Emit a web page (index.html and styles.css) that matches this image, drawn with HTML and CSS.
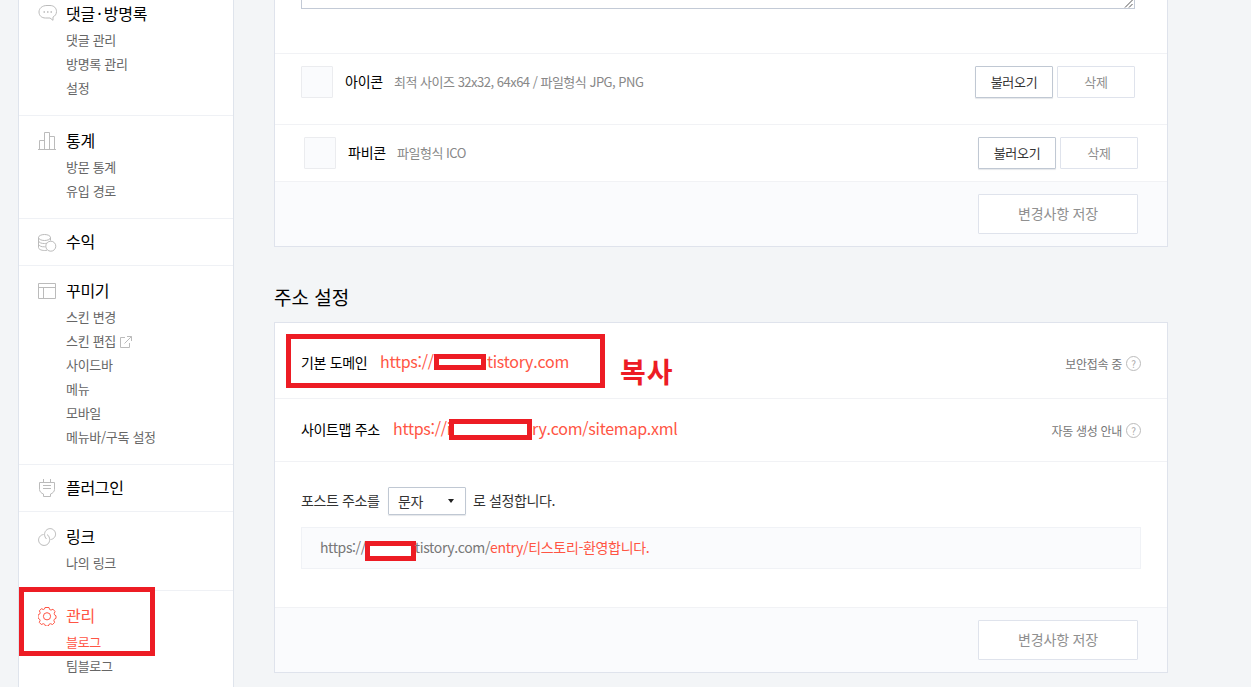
FILE: index.html
```html
<!DOCTYPE html>
<html lang="ko">
<head>
    <meta charset="UTF-8">
    <meta name="viewport" content="width=device-width, initial-scale=1.0">
    <title>블로그 관리</title>
    <link rel="stylesheet" href="styles.css">
</head>
<body>
    <div class="wrap">
        <nav class="sidebar">
            <div class="menu-group">
                <h2>
                    <svg class="ico" viewBox="0 0 20 20"><path d="M9 1.500h3c4 0 6.500 2.700 6.500 6 0 2.700-1.500 4.500-3.500 5.500v3.300l-3-2.300H7.500c-4 0-6.500-2.500-6.500-6s3-6.500 8-6.500z"/><path d="M5.500 8h1.500M9 8h1.500M12.500 8H14" stroke-width="1.500"/></svg>
                    댓글<span class="dot">·</span>방명록
                </h2>
                <ul>
                    <li>댓글 관리</li>
                    <li>방명록 관리</li>
                    <li>설정</li>
                </ul>
            </div>
            <div class="menu-group">
                <h2>
                    <svg class="ico" viewBox="0 0 20 20"><path d="M0 18.500h18M1.500 18V9.500h5M6.500 18V1.500h5V18M11.500 5.500h5V18"/></svg>
                    통계
                </h2>
                <ul>
                    <li>방문 통계</li>
                    <li>유입 경로</li>
                </ul>
            </div>
            <div class="menu-group single">
                <h2>
                    <svg class="ico ico-coin" viewBox="0 0 20 20"><ellipse cx="6.500" cy="4.500" rx="6" ry="3"/><path d="M.5 4.500v10c0 1.600 2.600 3 6 3 1 0 1.800-.1 2.500-.3M12.500 4.500v3M.5 8c.4 1.500 3 2.700 6 2.500 1 0 1.500-.1 2.300-.3M.5 11.300c.4 1.500 3 2.700 6 2.500h1"/><circle cx="12.800" cy="13.200" r="5"/></svg>
                    수익
                </h2>
            </div>
            <div class="menu-group">
                <h2>
                    <svg class="ico" viewBox="0 0 20 20"><path d="M.5 2.500h17v15H.500zM.5 6.500h17M5.500 6.500v11"/></svg>
                    꾸미기
                </h2>
                <ul>
                    <li>스킨 변경</li>
                    <li>스킨 편집 <svg class="ico-link" viewBox="0 0 12 12"><path d="M5 1.500H.5v10h9V7M7 .5h4.500V5M11.500.5L4.500 7.500"/></svg></li>
                    <li>사이드바</li>
                    <li>메뉴</li>
                    <li>모바일</li>
                    <li>메뉴바/구독 설정</li>
                </ul>
            </div>
            <div class="menu-group single">
                <h2>
                    <svg class="ico" viewBox="0 0 20 20"><path d="M5.500 1v3M12.500 1v3M1.500 4.500h15v7c0 2-2 4-4 4.500v2.500h-7V16c-2-.5-4-2.500-4-4.500zM5 7.500h8M5 10.500h8"/></svg>
                    플러그인
                </h2>
            </div>
            <div class="menu-group">
                <h2>
                    <svg class="ico" viewBox="0 0 20 20"><path d="M8.500 12C6 9.500 6 5.800 8 3.500c2.200-2.400 5.500-2.500 7.700-.5 2.300 2.100 2.500 5.500.5 7.700-1.200 1.300-2.400 1.700-3.700 1.800"/><path d="M9 7.500c2.500 1.500 3.600 5.600 1.700 8.500-1.700 2.600-5.200 3.100-7.700 1.500C.5 15.800-.2 12.300 1.600 9.800c1-1.400 2.400-2.100 4-2.300"/></svg>
                    링크
                </h2>
                <ul>
                    <li>나의 링크</li>
                </ul>
            </div>
            <div class="menu-group current">
                <h2>
                    <svg class="ico" viewBox="0 0 20 20"><path d="M7 1.500h4l.6 2 1.400.6 2-.9 2 2.300-.8 2 .3 1.300 1.500 1v2.500l-1.700 1-.4 1.200.7 2-2.100 2-2-.8-1.400.6-.8 1.700H7.500l-.8-1.700-1.400-.6-2 .8-2-2.100.8-2-.6-1.300L0 12V9l1.700-.9.5-1.300-.8-2 2-2.100 1.900.8 1.200-.5z"/><circle cx="9" cy="10.300" r="3.600"/></svg>
                    관리
                </h2>
                <ul>
                    <li class="on">블로그</li>
                    <li>팀블로그</li>
                </ul>
                <span class="mark mark-menu"></span>
            </div>
        </nav>

        <main class="content">
            <section class="panel panel-info">
                <div class="row row-desc">
                    <div class="desc-box">
                        <svg class="grip" viewBox="0 0 9 9"><path d="M1 8.500L8.500 1M5 8.500L8.500 5"/></svg>
                    </div>
                </div>
                <div class="row row-icon">
                    <span class="thumb"></span>
                    <strong>아이콘</strong>
                    <span class="hint">최적 사이즈 32x32, 64x64 / 파일형식 JPG, PNG</span>
                    <div class="btns">
                        <button class="btn">불러오기</button>
                        <button class="btn off">삭제</button>
                    </div>
                </div>
                <div class="row row-favicon">
                    <span class="thumb"></span>
                    <strong>파비콘</strong>
                    <span class="hint">파일형식 ICO</span>
                    <div class="btns">
                        <button class="btn">불러오기</button>
                        <button class="btn off">삭제</button>
                    </div>
                </div>
                <div class="panel-foot">
                    <button class="btn-save">변경사항 저장</button>
                </div>
            </section>

            <h3 class="title">주소 설정</h3>

            <section class="panel">
                <div class="row row-domain">
                    <span class="label">기본 도메인</span>
                    <span class="url">https://<i class="mask mask-a"></i><span class="rest-a">tistory.com</span></span>
                    <span class="help">보안접속 중 <i>?</i></span>
                    <span class="mark mark-domain"></span>
                    <b class="copy">복사</b>
                </div>
                <div class="row row-sitemap">
                    <span class="label">사이트맵 주소</span>
                    <span class="url">https://i<i class="mask mask-b"></i>ry.com/sitemap.xml</span>
                    <span class="help">자동 생성 안내 <i>?</i></span>
                </div>
                <div class="row row-post">
                    <div class="post-line">
                        <span class="before">포스트 주소를</span>
                        <div class="select">문자</div>
                        <span class="after">로 설정합니다.</span>
                    </div>
                    <div class="sample">
                        <span class="host">https://<i class="mask mask-c"></i>tistory.com/</span><em>entry/티스토리-환영합니다.</em>
                    </div>
                </div>
                <div class="panel-foot">
                    <button class="btn-save">변경사항 저장</button>
                </div>
            </section>
        </main>
    </div>
</body>
</html>
```
FILE: styles.css
```css
* {
    box-sizing: border-box;
    margin: 0;
    padding: 0;
}

body {
    height: 687px;
    overflow: hidden;
    background: #f3f5f7;
    font-family: "Noto Sans CJK KR", sans-serif;
    font-size: 13px;
    color: #000;
}

ul {
    list-style: none;
}

i, em {
    font-style: normal;
}

.wrap {
    display: flex;
    align-items: flex-start;
    gap: 40px;
    padding-left: 18px;
}

/* sidebar */
.sidebar {
    width: 216px;
    height: 698px;
    margin-top: -11px;
    background: #fff;
    border: 1px solid #dfe4ec;
    border-width: 0 1px;
}

.menu-group {
    position: relative;
    padding: 12px 0 15px 19px;
    border-bottom: 1px solid #eff1f5;
}

.menu-group.single {
    padding: 10px 0 12px 19px;
}

.menu-group h2 {
    display: flex;
    align-items: center;
    height: 24px;
    font-size: 16px;
    font-weight: 400;
    letter-spacing: -0.3px;
    white-space: nowrap;
}

.menu-group ul {
    margin: 3px 0 0 28px;
}

.menu-group li {
    height: 24px;
    line-height: 24px;
    letter-spacing: -0.3px;
    color: #666;
}

.menu-group .dot {
    width: 9px;
    text-align: center;
}

.ico {
    width: 20px;
    height: 20px;
    margin: 2px 8px 0 0;
    fill: none;
    stroke: #bbb;
}

.ico-coin {
    margin-top: 4px;
}

.ico-link {
    width: 12px;
    height: 12px;
    margin-left: 1px;
    vertical-align: -2px;
    fill: none;
    stroke: #bbb;
}

.current {
    border-bottom: 0;
}

.current h2,
.menu-group li.on {
    color: #ff5544;
}

.current .ico {
    stroke: #ff5544;
}

/* panels */
.content {
    width: 894px;
}

.panel {
    background: #fff;
    border: 1px solid #dfe3ec;
}

.panel-info {
    border-top: 0;
}

.row {
    position: relative;
    display: flex;
    align-items: center;
    padding: 0 26px;
    border-bottom: 1px solid #f1f2f5;
}

.row-desc {
    align-items: flex-start;
    height: 54px;
}

.desc-box {
    display: flex;
    justify-content: flex-end;
    width: 834px;
    height: 9px;
    border: 1px solid #c3cad6;
    border-top: 0;
}

.grip {
    width: 9px;
    height: 9px;
    margin: -1px 1px 0 0;
    fill: none;
    stroke: #555;
}

.row-icon {
    padding: 12px 32px 26px 26px;
}

.row-favicon {
    padding: 12px 29px;
}

.thumb {
    width: 32px;
    height: 32px;
    margin-right: 12px;
    background: #fafbfd;
    border: 1px solid #ebecef;
    border-radius: 1px;
}

.row strong {
    font-size: 14px;
    font-weight: 400;
    line-height: 20px;
    letter-spacing: -0.2px;
    margin: -3px 11px 0 0;
}

.hint {
    margin-top: -2px;
    letter-spacing: -0.5px;
    color: #888;
}

.btns {
    display: flex;
    gap: 4px;
    margin-left: auto;
}

.btn,
.btn-save {
    font-family: inherit;
    background: #fff;
    border: 1px solid #dfe3ec;
    border-radius: 1px;
    color: #909090;
}

.btn {
    width: 78px;
    height: 32px;
    padding-bottom: 2px;
    font-size: 13px;
    letter-spacing: -0.3px;
    color: #333;
    border-color: #c0c8d3;
    box-shadow: 0 1px 1px #e5e7ea;
}

.btn.off {
    color: #909090;
    border-color: #dfe3ec;
    box-shadow: none;
}

.btn-save {
    width: 160px;
    height: 40px;
    padding-bottom: 2px;
    font-size: 14px;
    letter-spacing: -0.2px;
}

.panel-foot {
    display: flex;
    justify-content: flex-end;
    padding: 12px 29px;
    background: #fafbfd;
}

.title {
    height: 75px;
    padding-top: 36px;
    font-size: 19px;
    font-weight: 400;
    line-height: 28px;
}

/* address settings */
.row-domain {
    height: 76px;
    padding-top: 5px;
}

.row-sitemap {
    height: 63px;
}

.label {
    width: 79px;
    margin-top: -2px;
    font-size: 14px;
    letter-spacing: -0.35px;
}

.row-sitemap .label {
    width: 92px;
}

.url {
    display: flex;
    align-items: center;
    margin-top: -4px;
    font-size: 16px;
    letter-spacing: -0.25px;
    color: #ff5544;
}

.mask {
    flex-shrink: 0;
    border: 5px solid #ed1c24;
    background: #fff;
}

.mask-a {
    width: 52px;
    height: 16px;
    margin-top: 2px;
}

.mask-b {
    width: 83px;
    height: 21px;
    margin: 2px 0 0 -2px;
}

.mask-c {
    width: 51px;
    height: 20px;
    margin: 7px -1px 0 -1px;
}

.rest-a {
    margin-left: 1px;
}

.help {
    display: flex;
    align-items: center;
    margin-left: auto;
    font-size: 12px;
    letter-spacing: -0.3px;
    color: #777;
}

.help i {
    width: 15px;
    height: 15px;
    margin-left: 4px;
    border: 1px solid #bbb;
    border-radius: 50%;
    font-size: 10px;
    line-height: 13px;
    text-align: center;
    color: #aaa;
}

.row-post {
    display: block;
    height: 146px;
    padding-top: 25px;
}

.post-line {
    display: flex;
    align-items: flex-start;
    height: 29px;
    font-size: 14px;
    line-height: 26px;
    letter-spacing: -0.4px;
    color: #333;
}

.before {
    width: 87px;
}

.select {
    display: flex;
    align-items: center;
    justify-content: space-between;
    width: 78px;
    height: 28px;
    margin-right: 7px;
    padding: 0 11px 0 9px;
    border: 1px solid #c0c8d3;
    border-radius: 1px;
    box-shadow: 0 1px 1px #e5e7ea;
}

.select::after {
    content: "";
    border: 3.5px solid transparent;
    border-top: 4px solid #222;
    border-bottom: 0;
}

.sample {
    display: flex;
    align-items: center;
    width: 840px;
    height: 42px;
    margin-top: 11px;
    padding: 0 0 2px 18px;
    background: #fafbfd;
    border: 1px solid #f0f2f6;
    font-size: 14px;
    letter-spacing: -0.38px;
    color: #777;
}

.host {
    display: flex;
    align-items: center;
}

.sample em {
    letter-spacing: -0.33px;
    color: #ff5544;
}

/* red highlight frames lie over the page */
.mark {
    position: absolute;
    border: 5px solid #ed1c24;
}

.mark-menu {
    left: 0;
    top: -4px;
    width: 136px;
    height: 69px;
}

.mark-domain {
    left: 11px;
    top: 11px;
    width: 319px;
    height: 54px;
}

.copy {
    position: absolute;
    left: 345px;
    top: 28px;
    font-size: 28px;
    line-height: 40px;
    letter-spacing: 1px;
    color: #ed1c24;
}
```
